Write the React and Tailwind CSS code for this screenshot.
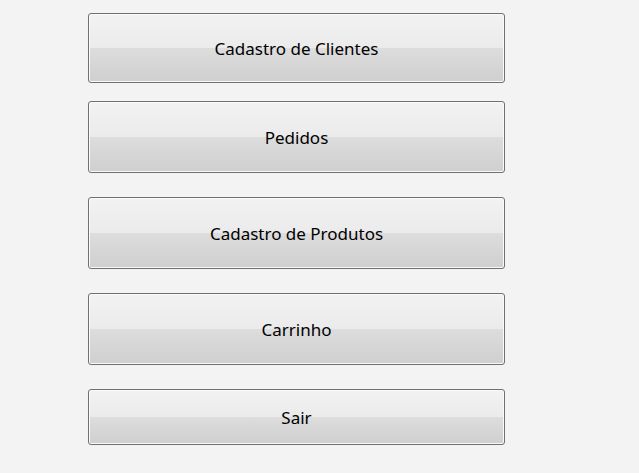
export default function App() {
  const btn =
    "w-[417px] rounded-[3px] border border-[#707070] shadow-[inset_0_0_0_1px_#fafafa] bg-[linear-gradient(to_bottom,#f2f2f2_0%,#ebebeb_50%,#dddddd_50%,#cfcfcf_100%)] flex items-center justify-center pt-[2px] text-[17px] text-black";
  return (
    <div
      className="h-[473px] w-[639px] bg-[#f3f3f3] pl-[88px] pt-[13px] flex flex-col"
      style={{ fontFamily: '"Noto Sans", "Open Sans", sans-serif' }}
    >
      <div className={`${btn} h-[70px]`}>Cadastro de Clientes</div>
      <div className={`${btn} h-[72px] mt-[18px]`}>Pedidos</div>
      <div className={`${btn} h-[72px] mt-[24px]`}>Cadastro de Produtos</div>
      <div className={`${btn} h-[72px] mt-[24px]`}>Carrinho</div>
      <div className={`${btn} h-[56px] mt-[24px]`}>Sair</div>
    </div>
  );
}
